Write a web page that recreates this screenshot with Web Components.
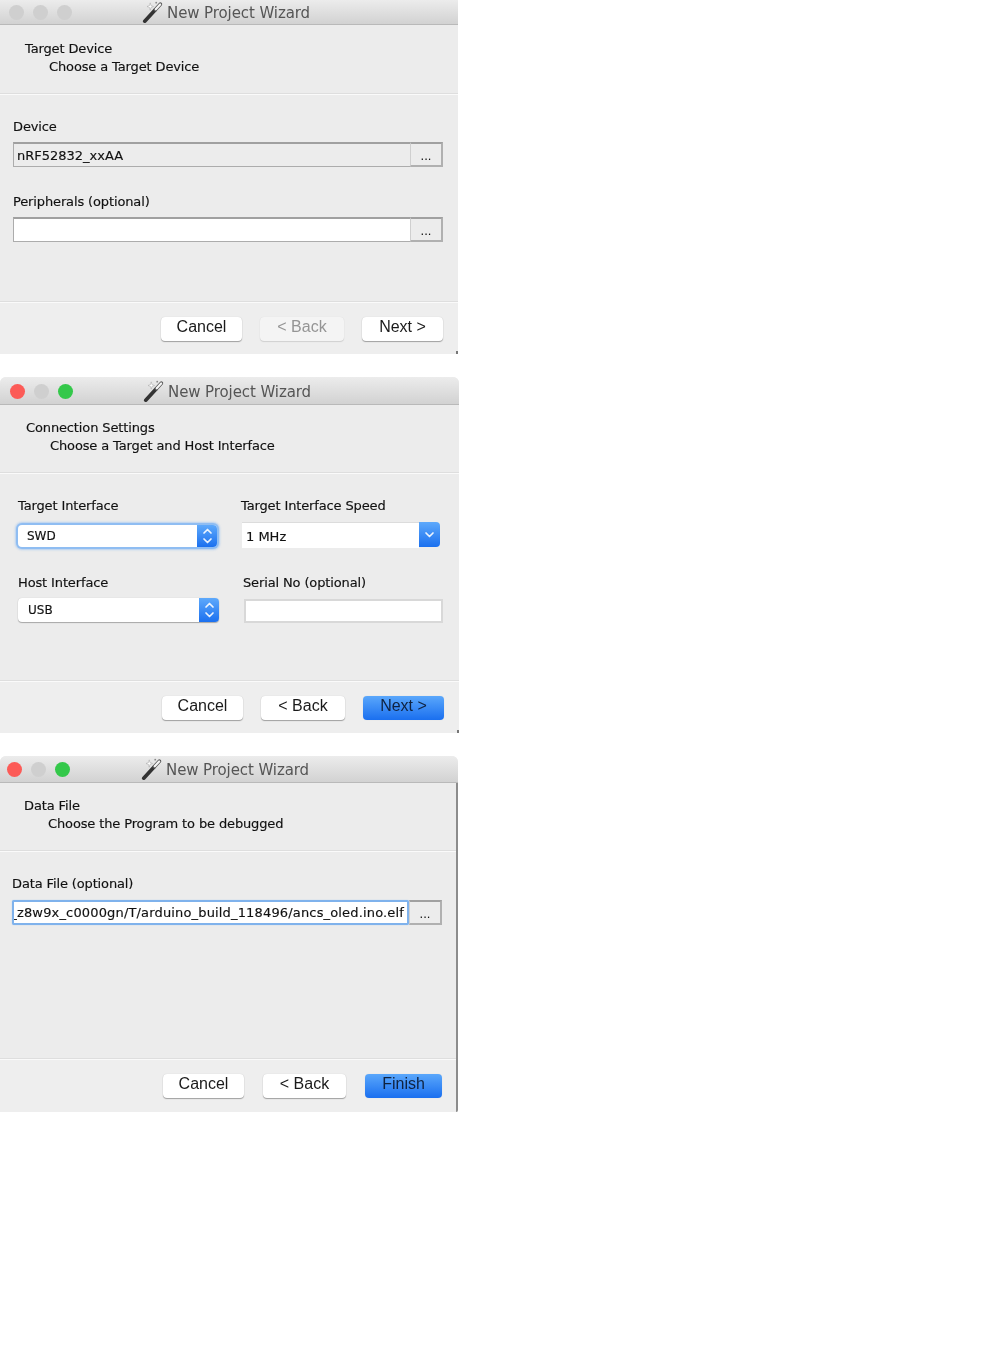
<!DOCTYPE html>
<html>
<head>
<meta charset="utf-8">
<title>New Project Wizard</title>
<style>
  html, body { margin: 0; background: #fff; }
  body { display: flex; flex-direction: column; gap: 23px; align-items: flex-start; font-family: "DejaVu Sans", sans-serif; }
  .stack { display: flex; flex-direction: column; }
  .grid { display: grid; grid-template-columns: 223px 1fr; }
</style>
</head>
<body>

<wizard-window lights="off" heading="Target Device" sub="Choose a Target Device"
  style="--w:458px; --h:354px; --title-h:25px; --title-pad:6px; --head-h:69px; --head-top:15px; --shift:0px; --light-x:8.5px; --light-top:0px; --radius:0px; --foot-h:52px; --foot-right:15px; --foot-gap:18px">
  <div class="stack" style="padding:23px 15px 0 13px; gap:26px">
    <wiz-field label="Device">
      <browse-field value="nRF52832_xxAA" muted></browse-field>
    </wiz-field>
    <wiz-field label="Peripherals (optional)">
      <browse-field></browse-field>
    </wiz-field>
  </div>
  <wiz-button slot="footer" style="width:81px">Cancel</wiz-button>
  <wiz-button slot="footer" style="width:84px" disabled>&lt; Back</wiz-button>
  <wiz-button slot="footer" style="width:81px">Next &gt;</wiz-button>
</wizard-window>

<wizard-window lights="on" heading="Connection Settings" sub="Choose a Target and Host Interface"
  style="--w:459px; --h:356px; --title-h:28px; --title-pad:5px; --head-h:68px; --head-top:14px; --shift:1px; --light-x:9.5px; --light-top:1px; --radius:6px; --foot-h:52px; --foot-right:15px; --foot-gap:18px">
  <div class="grid" style="padding:23px 16px 0 18px; row-gap:26px">
    <wiz-field label="Target Interface">
      <stepper-select value="SWD" focused style="width:201px"></stepper-select>
    </wiz-field>
    <wiz-field label="Target Interface Speed">
      <drop-select value="1 MHz" style="width:198px;margin:1px 0 0 1px"></drop-select>
    </wiz-field>
    <wiz-field label="Host Interface">
      <stepper-select value="USB" style="width:201px"></stepper-select>
    </wiz-field>
    <wiz-field label="Serial No (optional)" style="padding-left:2px">
      <plain-input style="margin:1px 0 0 1px"></plain-input>
    </wiz-field>
  </div>
  <wiz-button slot="footer" style="width:81px">Cancel</wiz-button>
  <wiz-button slot="footer" style="width:84px">&lt; Back</wiz-button>
  <wiz-button slot="footer" style="width:81px" primary>Next &gt;</wiz-button>
</wizard-window>

<wizard-window lights="on" heading="Data File" sub="Choose the Program to be debugged" edge
  style="--w:458px; --h:356px; --title-h:27px; --title-pad:8px; --head-h:68px; --head-top:14px; --shift:-1px; --light-x:7px; --light-top:0px; --radius:6px; --foot-h:53px; --foot-right:16px; --foot-gap:19px">
  <div class="stack" style="padding:23px 16px 0 12px">
    <wiz-field label="Data File (optional)" style="--gap:7px">
      <browse-field value="_z8w9x_c0000gn/T/arduino_build_118496/ancs_oled.ino.elf" focused></browse-field>
    </wiz-field>
  </div>
  <wiz-button slot="footer" style="width:81px">Cancel</wiz-button>
  <wiz-button slot="footer" style="width:83px">&lt; Back</wiz-button>
  <wiz-button slot="footer" style="width:77px" primary>Finish</wiz-button>
</wizard-window>

<script>
class WizardWindow extends HTMLElement {
  constructor() {
    super();
    this.attachShadow({ mode: 'open' });
  }

  connectedCallback() {
    const on = this.getAttribute('lights') === 'on';
    const dots = on
      ? ['#fc5b57', '#cfcfcf', '#34c84a']
      : ['#cfcfcf', '#cfcfcf', '#cfcfcf'];
    this.shadowRoot.innerHTML = `
      <style>
        :host {
          display: flex;
          flex-direction: column;
          width: var(--w);
          height: var(--h);
          box-sizing: border-box;
          background: #ececec;
          border-radius: var(--radius) var(--radius) 0 0;
          overflow: hidden;
          position: relative;
          font-family: "DejaVu Sans", sans-serif;
          color: #111;
          filter: blur(0.35px);
        }
        .title {
          height: var(--title-h);
          flex: none;
          box-sizing: border-box;
          display: grid;
          grid-template-columns: 1fr auto 1fr;
          align-items: center;
          padding-right: var(--title-pad);
          background: linear-gradient(#ececec, #d2d2d2);
          border-bottom: 1px solid #b9b9b9;
        }
        .lights { display: flex; gap: 9px; padding: var(--light-top) 0 0 var(--light-x); }
        .lights i { width: 15px; height: 15px; border-radius: 50%; display: block; }
        .name { display: flex; align-items: center; gap: 3px; font-size: 15px; letter-spacing: -.1px; color: #555; }
        .name span { padding-top: 2px; }
        .name svg { width: 22px; height: 22px; flex: none; }
        .head {
          height: var(--head-h);
          flex: none;
          box-sizing: border-box;
          padding: var(--head-top) 0 0 calc(25px + var(--shift));
          font-size: 13px;
          line-height: 18px;
          letter-spacing: -.13px;
          -webkit-text-stroke: .15px #111;
          border-bottom: 1px solid #dedede;
        }
        .head div + div { padding-left: 24px; }
        .body {
          flex: 1;
          min-height: 0;
          border-top: 1px solid #fafafa;
        }
        .foot {
          height: var(--foot-h);
          flex: none;
          box-sizing: border-box;
          display: flex;
          justify-content: flex-end;
          gap: var(--foot-gap);
          padding: 14px var(--foot-right) 0 0;
          border-top: 1px solid #fafafa;
          box-shadow: 0 -1px 0 #dedede;
          background: #eeeeee;
        }
        .corner {
          position: absolute;
          right: 0;
          bottom: 0;
          width: 2px;
          height: 3px;
          background: #777;
        }
        .edge {
          position: absolute;
          right: 0;
          top: var(--title-h);
          bottom: 0;
          width: 2px;
          background: #8c8c8c;
          border-radius: 0 0 2px 0;
        }
      </style>
      <div class="title">
        <div class="lights">${dots.map(c => `<i style="background:${c}"></i>`).join('')}</div>
        <div class="name">
          <svg viewBox="0 0 24 24">
            <path d="M3 22 L14 10" stroke="#333" stroke-width="4" stroke-linecap="round"/>
            <path d="M14.5 9.5 L20 3.5" stroke="#555" stroke-width="4" stroke-linecap="round"/>
            <path d="M15 9 L19.8 3.8" stroke="#f4f4f4" stroke-width="2.4" stroke-linecap="round"/>
            <path d="M9 2 L9.8 5 L12.5 6 L9.8 7 L9 10 L8.2 7 L5.5 6 L8.2 5 Z" fill="#fff" stroke="#9a9a9a" stroke-width=".5"/>
            <circle cx="15.5" cy="1.8" r="1" fill="#8a8a8a"/>
          </svg>
          <span>New Project Wizard</span>
        </div>
        <div></div>
      </div>
      <div class="head">
        <div>${this.getAttribute('heading')}</div>
        <div>${this.getAttribute('sub')}</div>
      </div>
      <div class="body"><slot></slot></div>
      <div class="foot"><slot name="footer"></slot></div>
      ${this.hasAttribute('edge') ? '<div class="edge"></div>' : '<div class="corner"></div>'}
    `;
  }
}

class WizField extends HTMLElement {
  constructor() {
    super();
    this.attachShadow({ mode: 'open' });
  }

  connectedCallback() {
    this.shadowRoot.innerHTML = `
      <style>
        :host { display: block; font-size: 13px; color: #111; min-width: 0; }
        label {
          display: block;
          line-height: 18px;
          padding-bottom: var(--gap, 6px);
          white-space: nowrap;
          letter-spacing: -.13px;
          -webkit-text-stroke: .15px #111;
        }
      </style>
      <label>${this.getAttribute('label')}</label>
      <slot></slot>
    `;
  }
}

class BrowseField extends HTMLElement {
  constructor() {
    super();
    this.attachShadow({ mode: 'open' });
  }

  connectedCallback() {
    const value = this.getAttribute('value') || '';
    this.shadowRoot.innerHTML = `
      <style>
        :host { display: flex; height: 25px; font-size: 13px; color: #111; -webkit-text-stroke: .15px #111; }
        .text {
          flex: 1;
          min-width: 0;
          box-sizing: border-box;
          display: flex;
          align-items: center;
          justify-content: flex-end;
          overflow: hidden;
          white-space: nowrap;
          padding: 0 3px;
          background: #fff;
          border: 1px solid #acacac;
          border-top: 2px solid #a0a0a0;
          border-right: 0;
        }
        .text span { flex: none; margin-right: auto; }
        :host([muted]) .text { background: #ececec; }
        :host([focused]) .text {
          border: 2px solid #7fb2ec;
          box-shadow: 0 0 1px #8dbcf0;
          border-radius: 2px;
        }
        :host([focused]) .text span { margin: 0; letter-spacing: .16px; }
        .more {
          flex: none;
          width: 33px;
          box-sizing: border-box;
          background: #ececec;
          border: 2px solid #b0b0b0;
          border-left: 1px solid #cfcfcf;
          border-top-color: #a0a0a0;
          text-align: center;
          line-height: 24px;
          font-size: 13px;
          -webkit-text-stroke: 0;
          font-family: "Liberation Sans", sans-serif;
        }
      </style>
      <div class="text"><span>${value}</span></div>
      <div class="more">...</div>
    `;
  }
}

const chevron = (d, w, h) =>
  `<svg width="${w}" height="${h}" viewBox="0 0 ${w} ${h}"><path d="${d}" fill="none" stroke="#fff" stroke-width="1.7" stroke-linecap="round" stroke-linejoin="round" opacity=".9"/></svg>`;

class StepperSelect extends HTMLElement {
  constructor() {
    super();
    this.attachShadow({ mode: 'open' });
  }

  connectedCallback() {
    this.shadowRoot.innerHTML = `
      <style>
        :host {
          display: flex;
          height: 24px;
          border-radius: 4px;
          background: #fff;
          box-shadow: 0 1px 1px rgba(0,0,0,.28), 0 0 1px rgba(0,0,0,.2);
          font-size: 12px;
          color: #111;
          -webkit-text-stroke: .15px #111;
        }
        :host([focused]) {
          height: 22px;
          margin-top: 4px;
          width: 199px !important;
          box-shadow: 0 0 0 2px #8fbdf2, 0 0 2px 3px rgba(143,189,242,.6);
        }
        .text { flex: 1; padding-left: 10px; line-height: 24px; }
        :host([focused]) .text { padding-left: 9px; line-height: 22px; }
        .btn {
          flex: none;
          width: 20px;
          border-radius: 0 4px 4px 0;
          background: linear-gradient(#5ea9fb, #1b70ef);
          display: flex;
          align-items: center;
          justify-content: center;
        }
      </style>
      <div class="text">${this.getAttribute('value')}</div>
      <div class="btn">${chevron('M2 6 L5.5 2.5 L9 6 M2 12 L5.5 15.5 L9 12', 11, 18)}</div>
    `;
  }
}

class DropSelect extends HTMLElement {
  constructor() {
    super();
    this.attachShadow({ mode: 'open' });
  }

  connectedCallback() {
    this.shadowRoot.innerHTML = `
      <style>
        :host { display: flex; height: 26px; font-size: 13px; color: #111; -webkit-text-stroke: .15px #111; }
        .text {
          flex: 1;
          background: #fff;
          padding: 1px 0 0 4px;
          line-height: 26px;
          border-top: 1px solid #dcdcdc;
          box-sizing: border-box;
          height: 26px;
        }
        .btn {
          flex: none;
          width: 21px;
          height: 25px;
          border-radius: 0 4px 4px 0;
          background: linear-gradient(#5ea9fb, #1b70ef);
          display: flex;
          align-items: center;
          justify-content: center;
        }
      </style>
      <div class="text">${this.getAttribute('value')}</div>
      <div class="btn">${chevron('M2 2 L5.5 5.5 L9 2', 11, 8)}</div>
    `;
  }
}

class PlainInput extends HTMLElement {
  constructor() {
    super();
    this.attachShadow({ mode: 'open' });
  }

  connectedCallback() {
    this.shadowRoot.innerHTML = `
      <style>
        :host {
          display: block;
          height: 24px;
          box-sizing: border-box;
          background: #fff;
          border: 2px solid #d8d8d8;
        }
      </style>
    `;
  }
}

class WizButton extends HTMLElement {
  constructor() {
    super();
    this.attachShadow({ mode: 'open' });
  }

  connectedCallback() {
    this.shadowRoot.innerHTML = `
      <style>
        :host {
          display: block;
          height: 24px;
          box-sizing: border-box;
          border-radius: 4px;
          background: #fff;
          box-shadow: 0 1px 1px rgba(0,0,0,.32), 0 0 1px rgba(0,0,0,.18);
          font-family: "Liberation Sans", sans-serif;
          font-size: 16px;
          line-height: 19px;
          text-align: center;
          color: #1a1a1a;
        }
        :host([disabled]) { background: #f4f4f4; color: #959595; box-shadow: 0 1px 1px rgba(0,0,0,.12), 0 0 1px rgba(0,0,0,.1); }
        :host([primary]) { background: linear-gradient(#5aa7fb, #1a6fef); color: #0f2240; box-shadow: 0 0 1px rgba(0,0,0,.15); }
      </style>
      <slot></slot>
    `;
  }
}

customElements.define('wizard-window', WizardWindow);
customElements.define('wiz-field', WizField);
customElements.define('browse-field', BrowseField);
customElements.define('stepper-select', StepperSelect);
customElements.define('drop-select', DropSelect);
customElements.define('plain-input', PlainInput);
customElements.define('wiz-button', WizButton);
</script>
</body>
</html>
